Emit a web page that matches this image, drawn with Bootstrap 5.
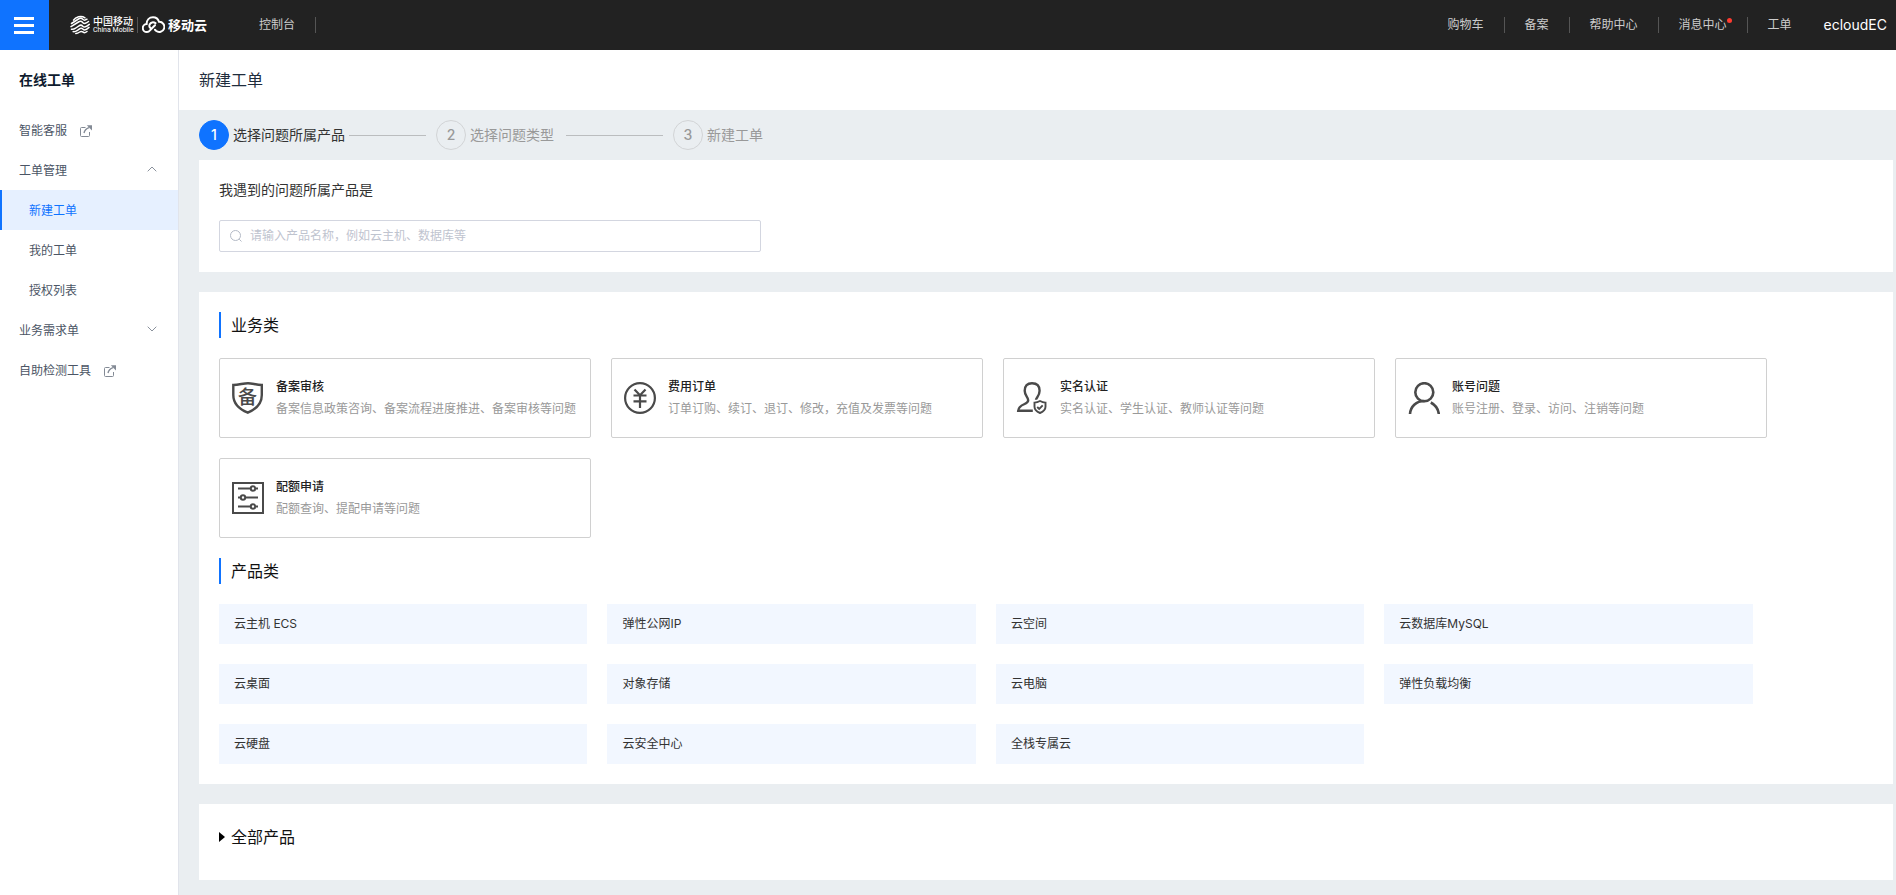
<!DOCTYPE html>
<html lang="zh-CN">
<head>
<meta charset="utf-8">
<meta name="viewport" content="width=device-width, initial-scale=1">
<title>新建工单</title>
<link href="https://cdn.jsdelivr.net/npm/bootstrap@5.3.0/dist/css/bootstrap.min.css" rel="stylesheet">
<style>
  :root { --brand: #0f73ff; --ink: #333; --muted: #999; --page: #eaeef1; }
  body { font-family: Inter, "Noto Sans CJK SC", sans-serif; font-size: 12px; line-height: 20px; color: var(--ink); background: var(--page); }
  a { text-decoration: none; color: inherit; }
  a:hover { color: var(--brand); }

  .topbar { background: #222; height: 50px; color: #ccc; }
  .menu-btn { width: 49px; height: 50px; background: var(--brand); border: 0; padding: 0 1px 0 0; }
  .brand-link { margin-left: 21px; height: 20px; }
  .brand-names { margin: 0 4px 0 3px; width: 40px; }
  .brand-cn { font-size: 10px; line-height: 10px; font-weight: 500; color: #fff; white-space: nowrap; }
  .brand-en { font-size: 7px; line-height: 8px; color: #fff; font-family: Roboto, "Liberation Sans", sans-serif; white-space: nowrap; }
  .brand-cloud { font-size: 13px; font-weight: 600; color: #fff; margin-left: 3px; }
  .bar-sep { width: 1px; height: 16px; background: #555; }
  .bar-link { padding: 0 20px; white-space: nowrap; }
  .console-link { margin-left: 32px; }
  .alert-dot { position: absolute; top: 3px; right: 15px; width: 5px; height: 5px; border-radius: 50%; background: #ff3b30; }
  .user-link { font-size: 14px; color: #fff; padding: 0 9px 0 12px; }

  .shell { min-height: calc(100vh - 50px); }
  .side { flex: 0 0 179px; background: #fff; border-right: 1px solid #e1e4eb; color: #4b5565; }
  .side-title { font-size: 14px; font-weight: 600; color: #0e1b2e; padding: 0 19px; line-height: 60px; margin: 0; }
  .side-link { display: flex; align-items: center; width: 100%; height: 40px; padding: 2px 21px 0 19px; border: 0; background: none; color: inherit; }
  .side-link .chevron { margin-bottom: 4px; }
  .side-link .outlink { margin-left: 13px; }
  .side-link.sub-item { padding-left: 29px; }
  .side-link.sub-item.current { background: #e6f0ff; color: var(--brand); border-left: 2px solid var(--brand); padding-left: 27px; }

  .page-title { background: #fff; font-size: 16px; line-height: 60px; padding: 0 20px; margin: 0; color: #1f2d3d; font-weight: 400; }
  .work { padding: 0 3px 15px 20px; }
  .steps { height: 50px; font-size: 14px; color: var(--muted); list-style: none; }
  .step-no { width: 30px; height: 30px; border-radius: 50%; border: 1px solid #d2d4d6; margin-right: 4px; font-weight: 500; }
  .step-one .step-no { background: var(--brand); border-color: var(--brand); color: #fff; }
  .step-one { color: var(--ink); }
  .step-item { width: 237px; padding-right: 10px; white-space: nowrap; }
  .step-item::after { content: ""; flex: 1; height: 1px; background: #bbbdbf; margin-left: 4px; }
  .step-two::after { margin-left: 12px; }
  .step-three::after { content: none; }

  .panel { background: #fff; padding: 20px; }
  .panel-main { margin: 20px 0; }
  .ask { font-size: 14px; }
  .search-box { max-width: 542px; height: 32px; border: 1px solid #d3d6e0; border-radius: 2px; padding: 0 10px; margin-top: 20px; }
  .search-box input { border: 0; outline: 0; padding: 0; font-size: 12px; color: var(--ink); background: none; }
  .search-box input::placeholder { color: #bfc4cf; opacity: 1; }
  .group-title { font-size: 16px; line-height: 26px; font-weight: 400; color: #111; border-left: 2px solid var(--brand); padding-left: 10px; margin: 0 0 20px; }

  .topics { gap: 20px; margin-bottom: 20px; }
  .topic { flex: 0 0 372px; min-width: 0; height: 80px; border: 1px solid #d0d0d0; border-radius: 2px; padding: 0 12px; gap: 12px; }
  .topic svg { flex: none; }
  .topic-name { font-weight: 500; color: #222; line-height: 22px; }
  .topic-note { color: var(--muted); line-height: 22px; white-space: nowrap; }

  .products { width: 94%; display: grid; grid-template-columns: repeat(4, 1fr); gap: 20px; padding-right: 21px; }
  .product { background: #f2f7ff; line-height: 40px; padding: 0 15px; }

  .all-products summary { list-style: none; display: flex; align-items: center; gap: 6px; font-size: 16px; line-height: 26px; color: #111; }
  .all-products { padding-bottom: 30px; }
  .all-products[open] .caret { transform: rotate(90deg); }
</style>
</head>
<body>
<header class="topbar d-flex align-items-center">
  <button class="menu-btn d-flex align-items-center justify-content-center" type="button" aria-label="菜单">
    <svg width="20" height="17" viewBox="0 0 20 17" fill="#fff"><path d="M0 0h20v3H0zM0 7h20v3H0zM0 14h20v3H0z"/></svg>
  </button>
  <a href="#" class="brand-link d-flex align-items-center">
    <svg width="20" height="20" viewBox="0 0 20 20" fill="none" stroke="#fff" stroke-width="1.500" stroke-linejoin="round" stroke-linecap="round">
      <path d="M3.500 5.200C5.500 2 11 .2 15 2.800M1.500 8.500 8.500 4c2-1.200 3.300-.8 4.300.3 1.200 1.300 2.700 1 4.200-.1"/>
      <path d="M1 11.600 8.500 7c2-1.200 3.300-.6 4.200.5 1.500 1.700 3.700.9 5.800-1"/>
      <path d="M1.500 14.200c2 .5 3-.3 4.300-1.200L9 10.800c1.700-1.200 2.800-.7 3.800.4 1.600 1.700 3.800.6 6.500-1.800"/>
      <path d="M3.200 16.600c1.800.3 3-.4 4.300-1.300l2-1.400c1.500-1.100 2.600-.6 3.600.4 1.500 1.500 3.300.6 5.900-1.900"/>
      <path d="M5.800 18.500c1.500.1 2.600-.6 3.900-1.500 1.500-1 2.600-.5 3.500.2 1.100.9 2.300.5 3.800-.7"/>
    </svg>
    <span class="brand-names d-flex flex-column">
      <span class="brand-cn">中国移动</span>
      <span class="brand-en">China Mobile</span>
    </span>
    <span class="bar-sep me-1"></span>
    <svg width="23" height="18" viewBox="0 0 23 18" fill="none" stroke="#fff" stroke-width="2" stroke-linecap="round">
      <path d="M13.500 7.200C11.300 5.700 8.800 6.300 7.800 8.200c-.9 1.800-.2 3.300 1 4.100M13 9.200l-4.500 4.600C7.200 15.300 6.300 16 5 16a4 4 0 0 1-.4-8C4.600 4 7.300 1.200 11 1.200c3.100 0 5.200 1.800 6 4.600a5.100 5.100 0 1 1-3 9l-1-1"/>
    </svg>
    <span class="brand-cloud">移动云</span>
  </a>
  <div class="console-link d-flex align-items-center">
    <a href="#" class="bar-link">控制台</a><span class="bar-sep"></span>
  </div>
  <nav class="d-flex align-items-center ms-auto">
    <a href="#" class="bar-link">购物车</a><span class="bar-sep"></span>
    <a href="#" class="bar-link">备案</a><span class="bar-sep"></span>
    <a href="#" class="bar-link">帮助中心</a><span class="bar-sep"></span>
    <a href="#" class="bar-link position-relative">消息中心<span class="alert-dot"></span></a><span class="bar-sep"></span>
    <a href="#" class="bar-link">工单</a>
    <a href="#" class="user-link">ecloudEC</a>
  </nav>
</header>

<div class="shell d-flex">
  <aside class="side">
    <h2 class="side-title">在线工单</h2>
    <nav>
      <a href="#" class="side-link">智能客服
        <svg class="outlink" width="12" height="12" viewBox="0 0 12 12" fill="none" stroke="#838a95"><path d="M5.500 2.500h-4a1 1 0 0 0-1 1v7a1 1 0 0 0 1 1h7a1 1 0 0 0 1-1V7"/><path stroke-width="1.400" d="M4 8c.5-2.500 2.200-4.300 5-5.300"/><path d="M6.800.3H12v5.200z" fill="#838a95" stroke="none"/></svg>
      </a>
      <button type="button" class="side-link justify-content-between">工单管理
        <svg class="chevron" width="10" height="6" viewBox="0 0 10 6" fill="none" stroke="#8a919c"><path d="M.7 5.300 5 1l4.300 4.300"/></svg>
      </button>
      <a href="#" class="side-link sub-item current">新建工单</a>
      <a href="#" class="side-link sub-item">我的工单</a>
      <a href="#" class="side-link sub-item">授权列表</a>
      <button type="button" class="side-link justify-content-between">业务需求单
        <svg class="chevron" width="10" height="6" viewBox="0 0 10 6" fill="none" stroke="#8a919c"><path d="M.7.7 5 5 9.300.7"/></svg>
      </button>
      <a href="#" class="side-link">自助检测工具
        <svg class="outlink" width="12" height="12" viewBox="0 0 12 12" fill="none" stroke="#838a95"><path d="M5.500 2.500h-4a1 1 0 0 0-1 1v7a1 1 0 0 0 1 1h7a1 1 0 0 0 1-1V7"/><path stroke-width="1.400" d="M4 8c.5-2.500 2.200-4.300 5-5.300"/><path d="M6.800.3H12v5.200z" fill="#838a95" stroke="none"/></svg>
      </a>
    </nav>
  </aside>

  <main class="flex-grow-1">
    <h1 class="page-title">新建工单</h1>
    <div class="work">
      <ol class="steps d-flex align-items-center p-0 m-0">
        <li class="step-item step-one d-flex align-items-center"><span class="step-no d-flex align-items-center justify-content-center">1</span>选择问题所属产品</li>
        <li class="step-item step-two d-flex align-items-center"><span class="step-no d-flex align-items-center justify-content-center">2</span>选择问题类型</li>
        <li class="step-item step-three d-flex align-items-center"><span class="step-no d-flex align-items-center justify-content-center">3</span>新建工单</li>
      </ol>

      <section class="panel">
        <label for="product-search" class="ask d-block">我遇到的问题所属产品是</label>
        <div class="search-box d-flex align-items-center gap-2">
          <svg width="12" height="12" viewBox="0 0 12 12" fill="none" stroke="#b4bac6"><circle cx="5.500" cy="5.500" r="5"/><path d="m9.200 9.200 2.300 2.300"/></svg>
          <input id="product-search" type="text" class="flex-grow-1" placeholder="请输入产品名称，例如云主机、数据库等">
        </div>
      </section>

      <section class="panel panel-main">
        <h2 class="group-title">业务类</h2>
        <div class="topics d-flex flex-wrap">
          <a href="#" class="topic d-flex align-items-center">
            <svg width="32" height="32" viewBox="0 0 32 32" fill="none" stroke="#4a4a4a" stroke-width="2.400"><path d="M16 1.200c-4.500 0-8.500 1.500-14.700 1.800V13c0 8.500 5.500 14 14.500 17.700C24.500 27 29.800 21.500 29.800 13V3C24 2.700 20 1.200 16 1.200z"/><text x="15.500" y="22" font-size="19" font-weight="500" text-anchor="middle" fill="#4a4a4a" stroke="none">备</text></svg>
            <div><div class="topic-name">备案审核</div><div class="topic-note">备案信息政策咨询、备案流程进度推进、备案审核等问题</div></div>
          </a>
          <a href="#" class="topic d-flex align-items-center">
            <svg width="32" height="32" viewBox="0 0 32 32" fill="none" stroke="#4a4a4a" stroke-width="2.200"><circle cx="16" cy="16" r="14.900"/><path d="m10.500 7.500 5.500 5.700 5.500-5.700M9.500 13.500h13M9.500 19.300h13M16 13v13"/></svg>
            <div><div class="topic-name">费用订单</div><div class="topic-note">订单订购、续订、退订、修改，充值及发票等问题</div></div>
          </a>
          <a href="#" class="topic d-flex align-items-center">
            <svg width="32" height="32" viewBox="0 0 32 32" fill="none" stroke="#4a4a4a" stroke-width="2.400"><path d="M20 17.800c0-2 3.600-3.600 3.600-9C23.600 4 20.700 1.200 16 1.200S8.700 4 8.700 8.800c0 5 3.500 6.200 3.500 9.400 0 5.200-9.400 2.800-10 10.600h14.600"/><g stroke-width="1.900"><path d="M24 19c-1.800 1-3.500 1.500-5.500 1.600v4.200c0 3 2 4.800 5.500 6.200 3.500-1.400 5.500-3.200 5.500-6.200v-4.200c-2-.1-3.700-.6-5.500-1.600z"/><path d="m21.200 25 2 1.900 3.500-3.500"/></g></svg>
            <div><div class="topic-name">实名认证</div><div class="topic-note">实名认证、学生认证、教师认证等问题</div></div>
          </a>
          <a href="#" class="topic d-flex align-items-center">
            <svg width="32" height="32" viewBox="0 0 32 32" fill="none" stroke="#4a4a4a" stroke-width="2.600"><circle cx="16.300" cy="10.200" r="9"/><path d="M2 32c.5-7.500 6-13 14.500-13M22.800 20.500c4.700 2.500 7.500 6.700 8 11.500"/></svg>
            <div><div class="topic-name">账号问题</div><div class="topic-note">账号注册、登录、访问、注销等问题</div></div>
          </a>
          <a href="#" class="topic d-flex align-items-center">
            <svg width="32" height="32" viewBox="0 0 32 32" fill="none" stroke="#4a4a4a" stroke-width="2"><path d="M1 1h30v30H1z"/><path d="M6 6.500h12.500M23.500 6.500H26M6 15.500h2.500M13.500 15.500H26M6 24.500h12.500M23.500 24.500H26"/><g><circle cx="21" cy="6.500" r="2.200"/><circle cx="11" cy="15.500" r="2.200"/><circle cx="21" cy="24.500" r="2.200"/></g></svg>
            <div><div class="topic-name">配额申请</div><div class="topic-note">配额查询、提配申请等问题</div></div>
          </a>
        </div>

        <h2 class="group-title">产品类</h2>
        <div class="products">
          <a href="#" class="product">云主机 ECS</a>
          <a href="#" class="product">弹性公网IP</a>
          <a href="#" class="product">云空间</a>
          <a href="#" class="product">云数据库MySQL</a>
          <a href="#" class="product">云桌面</a>
          <a href="#" class="product">对象存储</a>
          <a href="#" class="product">云电脑</a>
          <a href="#" class="product">弹性负载均衡</a>
          <a href="#" class="product">云硬盘</a>
          <a href="#" class="product">云安全中心</a>
          <a href="#" class="product">全栈专属云</a>
        </div>
      </section>

      <details class="panel all-products">
        <summary><svg class="caret" width="6" height="10" viewBox="0 0 6 10"><path d="M0 0l6 5-6 5z"/></svg>全部产品</summary>
      </details>
    </div>
  </main>
</div>
<script src="https://cdn.jsdelivr.net/npm/bootstrap@5.3.0/dist/js/bootstrap.bundle.min.js"></script>
</body>
</html>
